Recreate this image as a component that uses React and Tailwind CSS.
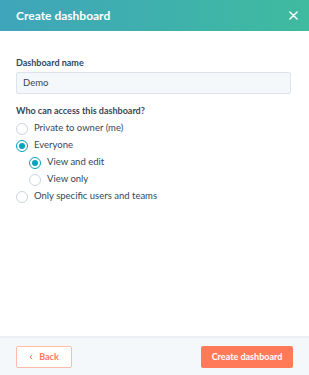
const Radio = ({ checked, label, indent }) => {
    return (
        <label className={`flex items-center gap-[6px] h-[17px] ${indent ? 'pl-[13px]' : ''}`}>
            <span className={`w-[12px] h-[12px] rounded-full border flex items-center justify-center bg-white ${checked ? 'border-[#00a4bd]' : 'border-[#cbd6e2]'}`}>
                {checked && <span className="w-[6px] h-[6px] rounded-full bg-[#00a4bd]"></span>}
            </span>
            <span className="text-[9.5px] text-[#33475b]">{label}</span>
        </label>
    )
}

const App = () => {
    return (
        <div className="w-[309px] h-[375px] flex flex-col bg-white" style={{ fontFamily: 'Lato, "Open Sans", sans-serif' }}>
            <div className="h-[31px] flex items-center justify-between pl-4 pr-[10px] bg-gradient-to-r from-[#3fa5ba] to-[#3fbb9f]">
                <h1 className="text-[12px] font-bold text-white">Create dashboard</h1>
                <svg width="9" height="9" viewBox="0 0 10 10" className="mr-[1px]">
                    <path d="M1 1 L9 9 M9 1 L1 9" stroke="white" strokeWidth="1.6" strokeLinecap="round" />
                </svg>
            </div>

            <div className="flex-1 px-4 pt-[25px]">
                <div className="text-[9px] leading-[13px] font-bold text-[#33475b] mb-[3px]">Dashboard name</div>
                <div className="h-[22px] w-[275px] border border-[#dfe3eb] bg-[#f5f8fa] rounded-[2px] flex items-center px-[6px] text-[9.5px] text-[#33475b]">Demo</div>

                <div className="text-[9px] leading-[13px] font-bold text-[#33475b] mt-[10px] mb-[3px]">Who can access this dashboard?</div>
                <div className="flex flex-col">
                    <Radio label="Private to owner (me)" />
                    <Radio checked label="Everyone" />
                    <Radio checked indent label="View and edit" />
                    <Radio indent label="View only" />
                    <Radio label="Only specific users and teams" />
                </div>
            </div>

            <div className="h-[39px] border-t-2 border-[#eaf0f6] bg-[#f5f8fa] flex items-center justify-between px-4">
                <button className="w-[56px] h-[22px] border border-[#ffbca9] bg-white rounded-[2px] flex items-center justify-center gap-[6px] text-[9px] font-bold text-[#ff7a59]">
                    <svg width="4" height="6" viewBox="0 0 4 6">
                        <path d="M3 0.8 L1 3 L3 5.2" stroke="#ff7a59" strokeWidth="1" fill="none" />
                    </svg>
                    Back
                </button>
                <button className="w-[92px] h-[22px] bg-[#ff7a59] rounded-[2px] text-[9px] font-bold text-white">Create dashboard</button>
            </div>
        </div>
    )
}

export default App
